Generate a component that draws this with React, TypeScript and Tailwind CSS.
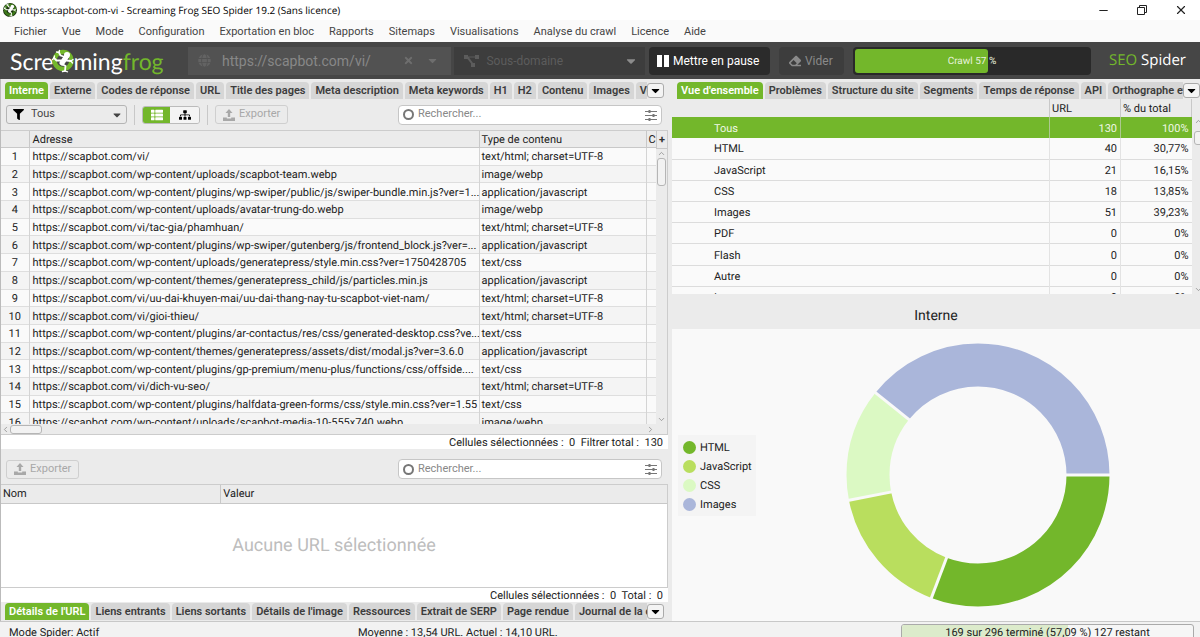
import React from 'react';
import { FaCaretDown, FaEraser, FaFilter, FaGlobe, FaSitemap, FaThList, FaTimes } from 'react-icons/fa';
import { ChevronDown, ChevronLeft, ChevronRight, ChevronUp, Minus, X } from 'lucide-react';

const menus = ['Fichier', 'Vue', 'Mode', 'Configuration', 'Exportation en bloc', 'Rapports', 'Sitemaps', 'Visualisations', 'Analyse du crawl', 'Licence', 'Aide'];

const mainTabs = ['Interne', 'Externe', 'Codes de réponse', 'URL', 'Title des pages', 'Meta description', 'Meta keywords', 'H1', 'H2', 'Contenu', 'Images', 'Vo'];
const detailTabs = ["Détails de l'URL", 'Liens entrants', 'Liens sortants', "Détails de l'image", 'Ressources', 'Extrait de SERP', 'Page rendue', 'Journal de la co'];
const overviewTabs = ["Vue d'ensemble", 'Problèmes', 'Structure du site', 'Segments', 'Temps de réponse', 'API', 'Orthographe et'];

const HTML = 'text/html; charset=UTF-8';
const JS = 'application/javascript';

const pages = [
  ['https://scapbot.com/vi/', HTML],
  ['https://scapbot.com/wp-content/uploads/scapbot-team.webp', 'image/webp'],
  ['https://scapbot.com/wp-content/plugins/wp-swiper/public/js/swiper-bundle.min.js?ver=1...', JS],
  ['https://scapbot.com/wp-content/uploads/avatar-trung-do.webp', 'image/webp'],
  ['https://scapbot.com/vi/tac-gia/phamhuan/', HTML],
  ['https://scapbot.com/wp-content/plugins/wp-swiper/gutenberg/js/frontend_block.js?ver=...', JS],
  ['https://scapbot.com/wp-content/uploads/generatepress/style.min.css?ver=1750428705', 'text/css'],
  ['https://scapbot.com/wp-content/themes/generatepress_child/js/particles.min.js', JS],
  ['https://scapbot.com/vi/uu-dai-khuyen-mai/uu-dai-thang-nay-tu-scapbot-viet-nam/', HTML],
  ['https://scapbot.com/vi/gioi-thieu/', HTML],
  ['https://scapbot.com/wp-content/plugins/ar-contactus/res/css/generated-desktop.css?ve...', 'text/css'],
  ['https://scapbot.com/wp-content/themes/generatepress/assets/dist/modal.js?ver=3.6.0', JS],
  ['https://scapbot.com/wp-content/plugins/gp-premium/menu-plus/functions/css/offside....', 'text/css'],
  ['https://scapbot.com/vi/dich-vu-seo/', HTML],
  ['https://scapbot.com/wp-content/plugins/halfdata-green-forms/css/style.min.css?ver=1.55', 'text/css'],
  ['https://scapbot.com/wp-content/uploads/scapbot-media-10-555x740.webp', 'image/webp'],
];

const overview = [
  ['Tous', '130', '100%'],
  ['HTML', '40', '30,77%'],
  ['JavaScript', '21', '16,15%'],
  ['CSS', '18', '13,85%'],
  ['Images', '51', '39,23%'],
  ['PDF', '0', '0%'],
  ['Flash', '0', '0%'],
  ['Autre', '0', '0%'],
  ['Inconnu', '0', '0%'],
];

const slices = [
  { label: 'HTML', value: 40, color: '#73b72b' },
  { label: 'JavaScript', value: 21, color: '#b9de5e' },
  { label: 'CSS', value: 18, color: '#dbf9c3' },
  { label: 'Images', value: 51, color: '#aab6da' },
];

const FrogMark = ({ className }: { className: string }) => (
  <svg viewBox="0 0 24 24" className={className} aria-hidden="true">
    <circle cx="12" cy="11.500" r="8.500" fill="none" stroke="currentColor" strokeWidth="4.500" />
    <g fill="none" stroke="#fff" strokeLinecap="round" strokeLinejoin="round">
      <path d="M15.500 7.500 11 14" strokeWidth="5" />
      <path d="M12.500 7.500 9.500 6.500 8 3.500M9.500 11.500 5.500 11.500 3 9M11 15l3.500 2-.5 5M15.500 11.500l4.500.5" strokeWidth="1.800" />
      <path d="M8 3.500 5.500 3M8 3.500 8.500 1.500M3 9 1.500 10.500M3 9 3.500 7M14 22l-2.500.5M14 22l2.500.8M20 12l2-1.500M20 12l1.500 2" strokeWidth="1.300" />
    </g>
    <circle cx="16" cy="6" r="3" fill="#fff" />
  </svg>
);

const ExportIcon = () => (
  <svg viewBox="0 0 12 12" className="size-3" fill="currentColor" aria-hidden="true">
    <path d="M6 0 9.500 4H7.200v4H4.800V4H2.500z" />
    <path d="M0 8.500h3.800v1h4.400v-1H12V12H0z" />
  </svg>
);

const SlidersIcon = () => (
  <svg viewBox="0 0 12 12" className="size-3 shrink-0" fill="none" stroke="#777" aria-hidden="true">
    <path d="M0 2.500h12M0 6.500h12M0 10.500h12" />
    <path d="M4.500 1v3M8.500 5v3M4.500 9v3" strokeWidth="2" />
  </svg>
);

const Tabs = ({ items, label }: { items: string[]; label: string }) => (
  <div className="flex h-[17px] items-stretch">
    <div role="tablist" aria-label={label} className="flex min-w-0 flex-1 gap-[2px] overflow-hidden">
      {items.map((item, i) => (
        <button
          key={item}
          role="tab"
          aria-selected={i === 0}
          className={
            i === 0
              ? 'shrink-0 rounded-t-sm bg-[#73b72b] px-1 pt-px leading-4 font-semibold whitespace-nowrap text-white'
              : 'shrink-0 rounded-t-sm bg-[#d6d6d6] px-1 pt-px leading-4 font-semibold whitespace-nowrap text-[#3c3c3c]'
          }
        >
          {item}
        </button>
      ))}
    </div>
    <button aria-label="Plus d'onglets" className="my-px flex w-[17px] shrink-0 items-center justify-center rounded-[3px] border border-[#aaa] bg-[#f4f4f4] text-black">
      <FaCaretDown size={13} />
    </button>
  </div>
);

const SearchBox = ({ id }: { id: string }) => (
  <div className="flex h-5 w-[264px] shrink-0 items-center gap-1 rounded-sm border border-[#c6c6c6] bg-white px-1">
    <span className="size-[11px] shrink-0 rounded-full border-2 border-[#777]" />
    <input id={id} aria-label="Rechercher" placeholder="Rechercher..." className="min-w-0 flex-1 bg-transparent text-[#333] outline-none placeholder:text-[#888]" />
    <SlidersIcon />
  </div>
);

const ExportButton = () => (
  <button disabled className="flex h-[19px] items-center gap-1 rounded-[3px] border border-[#cfcfcf] px-[7px] text-[#a8a8a8]">
    <ExportIcon />
    Exporter
  </button>
);

const Donut = () => {
  const total = slices.reduce((sum, s) => sum + s.value, 0);
  const startOf = (i: number) => slices.slice(0, i).reduce((sum, s) => sum + s.value, 0);
  return (
    <svg viewBox="-132 -132 264 264" className="size-[264px]" role="img" aria-label="Interne">
      {slices.map((s, i) => (
        <circle
          key={s.label}
          r="110"
          fill="none"
          stroke={s.color}
          strokeWidth="43"
          pathLength={total}
          strokeDasharray={`${s.value} ${total - s.value}`}
          strokeDashoffset={-startOf(i)}
        />
      ))}
      {slices.map((s, i) => (
        <line key={s.label} x1="84" x2="134" stroke="#f9f9f9" strokeWidth="3" transform={`rotate(${(startOf(i) / total) * 360})`} />
      ))}
    </svg>
  );
};

export default function App() {
  return (
    <div className="flex h-screen flex-col overflow-hidden bg-[#ebebeb] font-[Roboto,sans-serif] text-[11px] text-[#222] [text-rendering:geometricPrecision]">
      <header>
        <div className="flex h-5 items-center bg-white pr-3 pl-[3px]">
          <span className="mr-[3px] flex size-[14px] rounded-full bg-[#1c3310] text-[#3f7a1c]">
            <FrogMark className="size-[14px]" />
          </span>
          <h1 className="flex-1 font-['Open_Sans',sans-serif] text-[10px] text-black">https-scapbot-com-vi - Screaming Frog SEO Spider 19.2 (Sans licence)</h1>
          <div className="flex items-center gap-[27px] text-[#222]">
            <button aria-label="Réduire"><Minus size={13} strokeWidth={2} /></button>
            <button aria-label="Restaurer">
              <svg viewBox="0 0 10 10" className="size-[10px]" fill="none" stroke="currentColor">
                <path d="M.5 2.500h7v7h-7zM2.500 2.500v-2h7v7h-2" />
              </svg>
            </button>
            <button aria-label="Fermer"><X size={14} strokeWidth={2} /></button>
          </div>
        </div>

        <nav className="flex h-[22px] items-center gap-[15px] bg-[#fafafa] px-[14px] pt-[2px] text-[#444]">
          {menus.map(menu => (
            <button key={menu} className="whitespace-nowrap">{menu}</button>
          ))}
        </nav>

        <div className="flex h-[37px] items-center bg-[#464646] pr-[14px] pl-[10px]">
          <div className="flex w-[178px] shrink-0 items-center font-[Lato,sans-serif] text-[23px] leading-7 text-white">
            <span>Scre</span>
            <FrogMark className="-mx-[2px] size-6 text-[#73b72b]" />
            <span>ming</span>
            <span className="text-[#73b72b]">frog</span>
          </div>
          <div className="flex h-7 min-w-0 flex-[244] items-center bg-[#525252] px-[10px] text-[#6e6e6e]">
            <FaGlobe size={13} className="shrink-0 text-[#636363]" />
            <input aria-label="URL" defaultValue="https://scapbot.com/vi/" className="ml-[11px] min-w-0 flex-1 bg-transparent text-sm text-[#888] outline-none" />
            <button aria-label="Effacer" className="mr-3"><FaTimes size={11} /></button>
            <button aria-label="Historique" className="mr-[2px]"><FaCaretDown size={13} /></button>
          </div>
          <div className="relative ml-[3px] h-7 min-w-0 flex-[191] bg-[#3d3d3d] text-[#5c5c5c]">
            <svg viewBox="0 0 16 12" className="absolute top-2 left-[10px] h-3 w-4" fill="currentColor" aria-hidden="true">
              <path d="M0 0h4v1.500h7V0h4v4h-4V2.500H5L9 8h2v4H7V8.500L3.500 4H0z" />
            </svg>
            <select aria-label="Mode de crawl" className="h-full w-full appearance-none bg-transparent pl-8 text-xs outline-none">
              <option>Sous-domaine</option>
            </select>
            <FaCaretDown size={14} className="pointer-events-none absolute top-[7px] right-[7px] text-[#8c8c8c]" />
          </div>
          <button className="ml-1 flex h-7 w-[121px] shrink-0 items-center gap-1 rounded-sm bg-[#2b2b2b] pl-2 text-xs whitespace-nowrap text-white">
            <svg viewBox="0 0 12 12" className="size-3" fill="currentColor" aria-hidden="true">
              <path d="M0 0h5v12H0zM7 0h5v12H7z" />
            </svg>
            Mettre en pause
          </button>
          <button className="ml-[9px] flex h-7 w-[65px] shrink-0 items-center gap-1 rounded-sm bg-[#3d3d3d] pl-[10px] text-xs text-[#8a8a8a]">
            <FaEraser size={12} />
            Vider
          </button>
          <div role="progressbar" aria-valuenow={57} aria-label="Crawl" className="relative ml-[9px] h-7 w-[238px] shrink-0 rounded-sm bg-[#292929] p-[2px]">
            <div className="h-full rounded-[3px] bg-[#73b72b]" style={{ width: '57%' }} />
            <span className="absolute inset-0 flex items-center justify-center pt-px text-[10px] text-[#e8f2de]">Crawl 57 %</span>
          </div>
          <p className="ml-[18px] shrink-0 font-['Open_Sans',sans-serif] text-[15px] text-white">
            <span className="text-[#73b72b]">SEO</span> Spider
          </p>
        </div>
      </header>

      <main className="flex min-h-0 flex-1">
        <div className="flex w-[56%] min-w-0 flex-col border-l border-[#bbb] pt-[3px] pr-1">
          <div className="px-1">
            <Tabs items={mainTabs} label="Données" />
          </div>
          <div className="flex h-[31px] shrink-0 items-center pr-[6px] pl-[5px]">
            <div className="relative">
              <FaFilter size={11} className="pointer-events-none absolute top-[4px] left-[7px] text-black" />
              <select aria-label="Filtre" className="h-[19px] w-[121px] appearance-none rounded-[3px] border border-[#b5b5b5] pl-6 text-[#444]">
                <option>Tous</option>
              </select>
              <FaCaretDown size={12} className="pointer-events-none absolute top-[4px] right-1 text-[#444]" />
            </div>
            <span className="mx-[7px] h-5 w-px bg-[#c8c8c8]" />
            <div className="flex h-[18px] w-[58px] overflow-hidden rounded-[3px] border border-[#bbb]">
              <button aria-label="Liste" className="-m-px flex flex-1 items-center justify-center rounded-[3px] bg-[#73b72b] text-white"><FaThList size={12} /></button>
              <button aria-label="Arborescence" className="flex flex-1 items-center justify-center bg-[#f4f4f4] text-black"><FaSitemap size={12} /></button>
            </div>
            <span className="mx-[7px] h-5 w-px bg-[#c8c8c8]" />
            <div className="flex-1"><ExportButton /></div>
            <SearchBox id="search-pages" />
          </div>

          <section className="flex min-h-0 flex-1 flex-col border-y border-r border-[#ccc]">
            <div className="flex min-h-0 flex-1 overflow-hidden">
              <div className="min-w-0 flex-1 overflow-hidden">
                <table className="h-[300px] w-full table-fixed border-collapse bg-[#fafafa] leading-[15px]">
                  <thead>
                    <tr className="border-b border-[#c8c8c8] bg-[#ebebeb] text-left">
                      <th className="w-7 border-r border-[#c8c8c8] p-0" />
                      <th className="border-r border-[#c8c8c8] pt-px pr-0 pb-0 pl-[3px] font-normal">Adresse</th>
                      <th className="w-[167px] border-r border-[#c8c8c8] pt-px pr-0 pb-0 pl-[2px] font-normal">Type de contenu</th>
                      <th className="w-[10px] overflow-hidden pt-px pr-0 pb-0 pl-[2px] font-normal">C</th>
                    </tr>
                  </thead>
                  <tbody>
                    {pages.map(([url, type], i) => (
                      <tr key={url} className="border-b border-[#dedede] even:bg-[#f4f4f4]">
                        <td className="border-r border-[#d4d4d4] px-0 pt-px pb-0 text-center">{i + 1}</td>
                        <td className="overflow-hidden border-r border-[#d4d4d4] pt-px pr-0 pb-0 pl-[3px] whitespace-nowrap">{url}</td>
                        <td className="border-r border-[#d4d4d4] pt-px pr-0 pb-0 pl-[2px] whitespace-nowrap">{type}</td>
                        <td className="p-0" />
                      </tr>
                    ))}
                  </tbody>
                </table>
              </div>
              <div className="flex w-[11px] shrink-0 flex-col items-center text-[#888]">
                <button aria-label="Ajouter une colonne" className="h-[18px] w-full border-b border-l border-[#c8c8c8] leading-4 font-bold text-[#333]">+</button>
                <ChevronUp size={9} />
                <span className="h-7 w-[9px] rounded-[3px] border border-[#b5b5b5] bg-[#f2f2f2]" />
                <ChevronDown size={9} className="mt-auto" />
              </div>
            </div>
            <div className="flex h-[10px] shrink-0 items-center pr-3 text-[#888]">
              <ChevronLeft size={9} />
              <span className="h-[9px] w-8 rounded-[3px] border border-[#b5b5b5] bg-[#f2f2f2]" />
              <ChevronRight size={9} className="ml-auto" />
            </div>
          </section>
          <p className="h-[14px] shrink-0 bg-white pr-[5px] text-right leading-4">Cellules sélectionnées :&nbsp; 0&nbsp; Filtrer total :&nbsp; 130</p>

          <div className="flex h-[35px] shrink-0 items-center justify-between pt-[5px] pr-[6px] pl-[5px]">
            <ExportButton />
            <SearchBox id="search-details" />
          </div>
          <section className="h-[104px] shrink-0 border border-l-0 border-[#ccc] bg-white">
            <table className="w-full table-fixed border-collapse leading-4">
              <thead>
                <tr className="h-[18px] border-b border-[#c8c8c8] bg-[#ebebeb] text-left">
                  <th className="w-[33%] border-r border-[#c8c8c8] pt-px pr-0 pb-0 pl-[2px] font-normal">Nom</th>
                  <th className="pt-px pr-0 pb-0 pl-[2px] font-normal">Valeur</th>
                </tr>
              </thead>
            </table>
            <p className="pt-[30px] text-center text-lg leading-6 text-[#bdbdbd]">Aucune URL sélectionnée</p>
          </section>
          <p className="h-[14px] shrink-0 bg-white pr-[5px] text-right leading-4">Cellules sélectionnées :&nbsp; 0&nbsp; Total :&nbsp; 0</p>
          <div className="px-1 py-px">
            <Tabs items={detailTabs} label="Détails" />
          </div>
        </div>

        <div className="flex min-w-0 flex-1 flex-col pt-[3px]">
          <div className="pl-[5px]">
            <Tabs items={overviewTabs} label="Vue" />
          </div>
          <div className="flex h-[195px] shrink-0 overflow-hidden">
            <div className="min-w-0 flex-1">
              <table className="h-[209px] w-full table-fixed border-collapse bg-[#fafafa] leading-4">
                <thead>
                  <tr className="h-[18px] bg-[#ebebeb] text-left">
                    <th className="p-0" />
                    <th className="w-[71px] border-l border-[#c8c8c8] pt-px pr-0 pb-0 pl-[2px] font-normal">URL</th>
                    <th className="w-[71px] border-x border-[#c8c8c8] pt-px pr-0 pb-0 pl-[2px] font-normal">% du total</th>
                  </tr>
                </thead>
                <tbody>
                  {overview.map(([name, count, share], i) => (
                    <tr key={name} className={i === 0 ? 'h-[21px] bg-[#73b72b] text-[#f0f8e6]' : 'h-[21px] border-b border-[#dcdcdc]'}>
                      <td className="pt-[2px] pr-0 pb-0 pl-[42px]">{name}</td>
                      <td className="border-l border-[#d4d4d4]/60 pt-[2px] pr-[3px] pb-0 pl-0 text-right">{count}</td>
                      <td className="border-l border-[#d4d4d4]/60 pt-[2px] pr-[3px] pb-0 pl-0 text-right">{share}</td>
                    </tr>
                  ))}
                </tbody>
              </table>
            </div>
            <div className="flex w-2 shrink-0 flex-col overflow-hidden pt-[18px] pl-[2px] text-[#888]">
              <ChevronUp size={9} className="shrink-0" />
              <span className="mt-[5px] h-[14px] w-[9px] shrink-0 rounded-[3px] border border-[#b5b5b5] bg-[#f2f2f2]" />
              <ChevronDown size={9} className="mt-auto shrink-0" />
            </div>
          </div>
          <h2 className="flex h-[35px] shrink-0 items-center justify-center pt-2 text-sm">Interne</h2>
          <section className="flex min-h-0 flex-1 items-center bg-[#f9f9f9] pl-[6px]">
            <ul className="w-[78px] space-y-[2px] bg-[#f4f4f4] pt-1 pb-[3px] pl-[5px]">
              {slices.map(s => (
                <li key={s.label} className="flex items-center gap-1 leading-[17px]">
                  <span className="size-[13px] rounded-full" style={{ backgroundColor: s.color }} />
                  {s.label}
                </li>
              ))}
            </ul>
            <div className="flex flex-1 justify-center">
              <Donut />
            </div>
          </section>
        </div>
      </main>

      <footer className="flex h-4 shrink-0 items-start border-t border-[#c8c8c8] bg-[#f2f2f2] pt-[2px] pr-[6px] pl-[9px] leading-[17px]">
        <p className="w-[349px] shrink-0">Mode Spider: Actif</p>
        <p className="flex-1">Moyenne : 13,54 URL. Actuel : 14,10 URL.</p>
        <div className="relative h-[18px] w-[293px] overflow-hidden rounded-[3px] border border-[#aaa] bg-[#f6f6f6]">
          <div className="h-full bg-[#dcebcb]" style={{ width: '57.09%' }} />
          <span className="absolute inset-0 text-center leading-4">169 sur 296 terminé (57,09 %) 127 restant</span>
        </div>
      </footer>
    </div>
  );
}
